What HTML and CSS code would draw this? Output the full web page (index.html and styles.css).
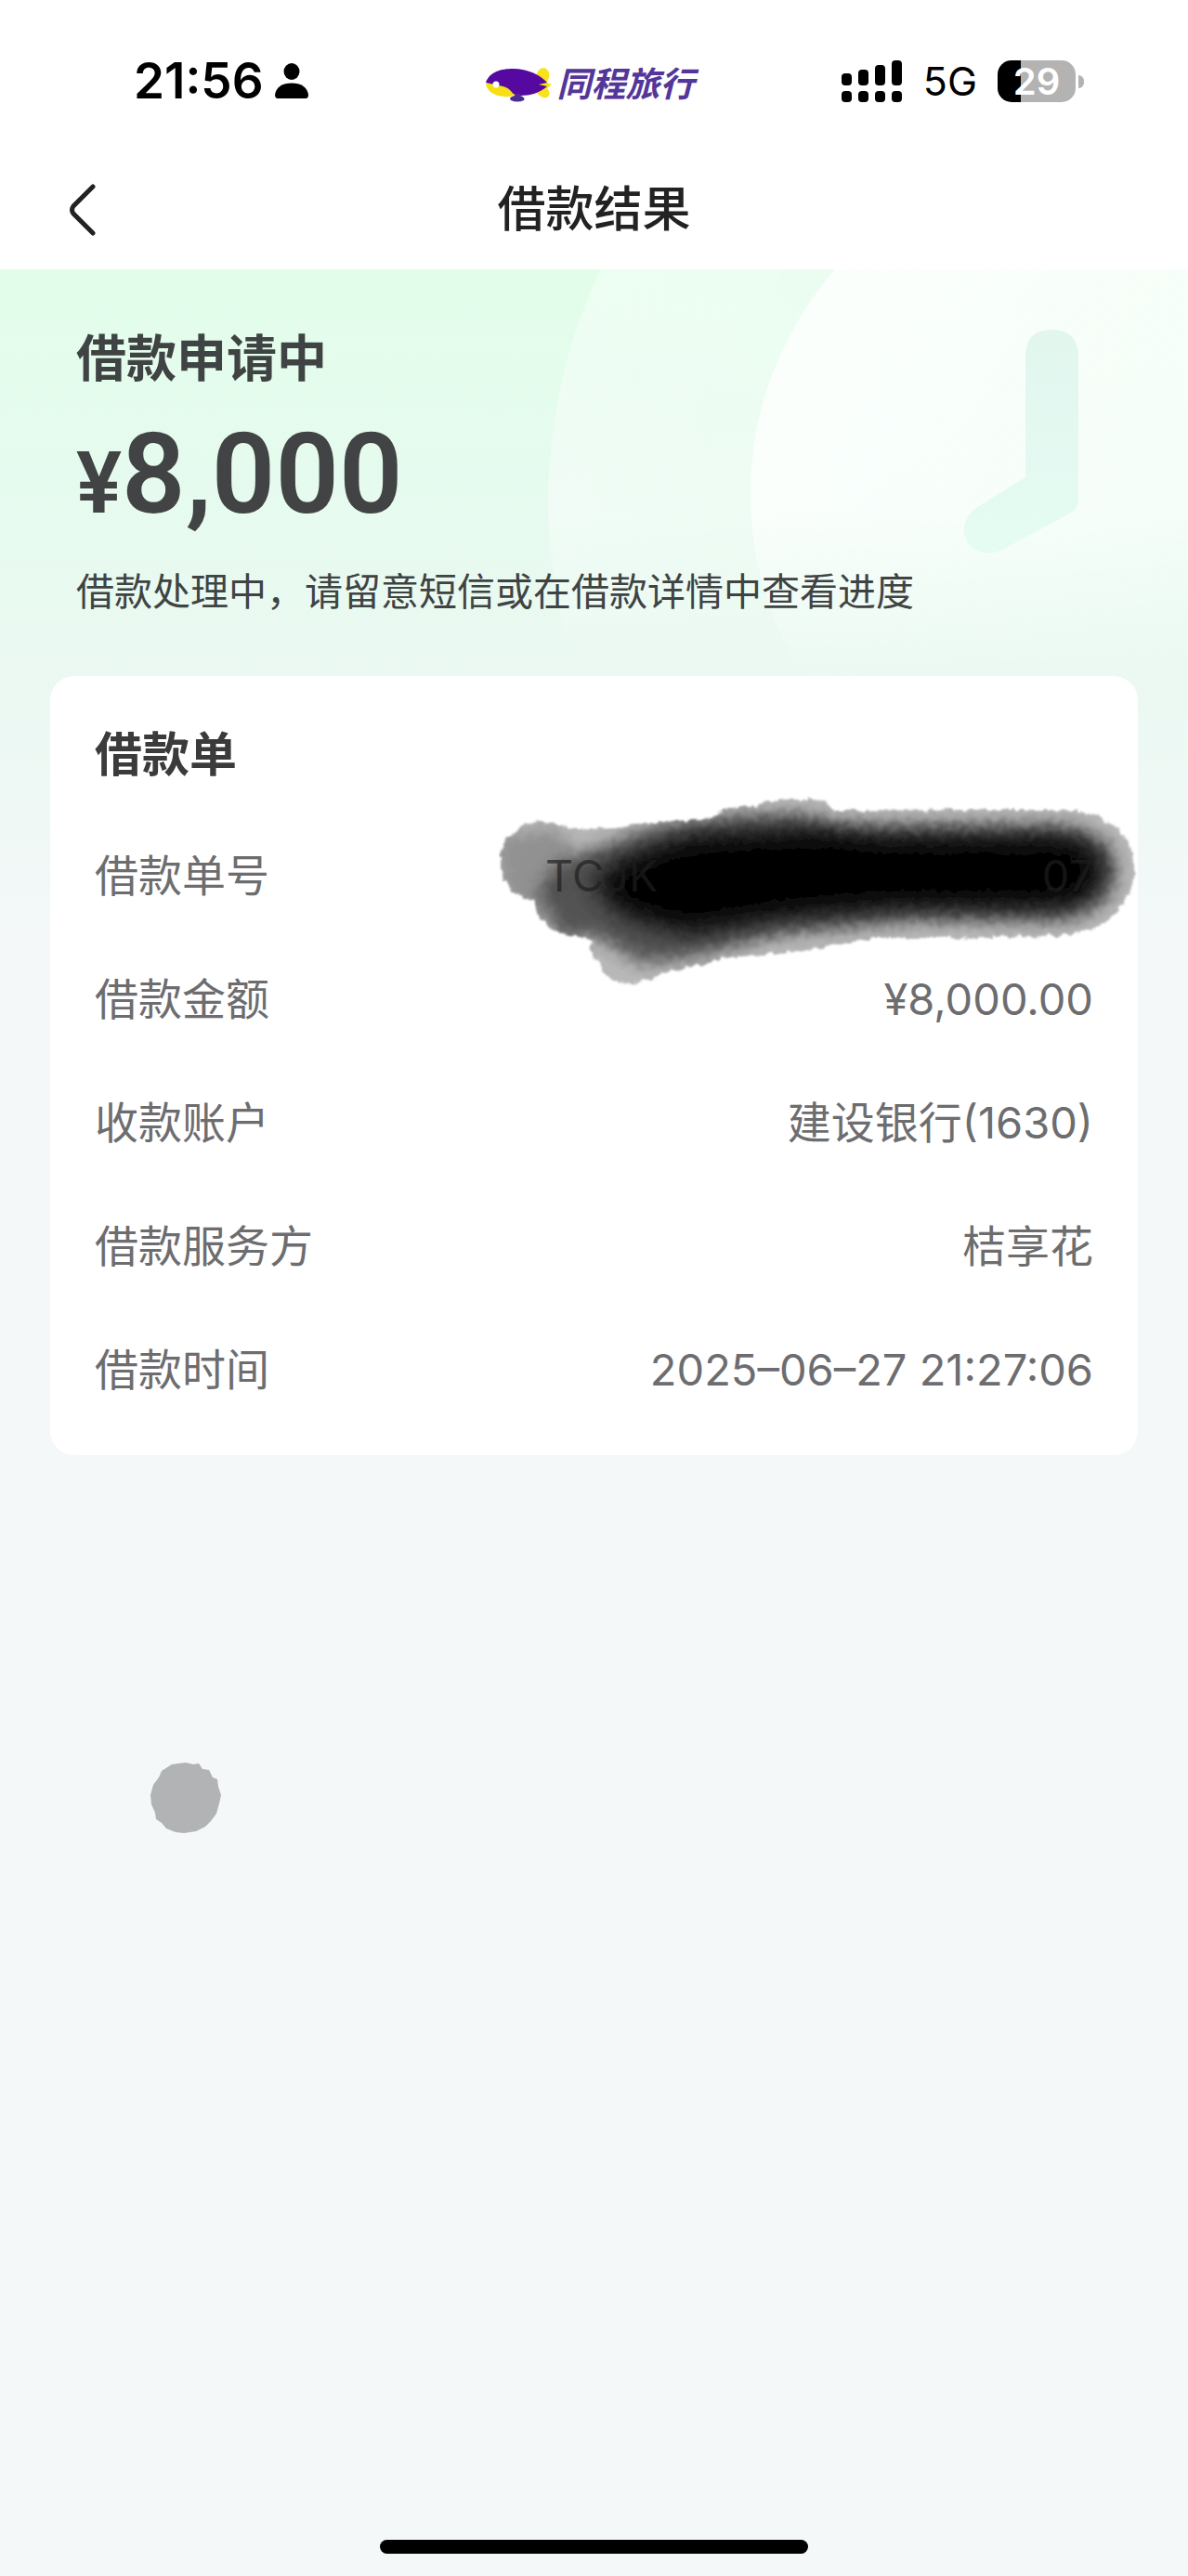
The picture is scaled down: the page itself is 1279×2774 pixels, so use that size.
FILE: index.html
```
<!DOCTYPE html>
<html lang="zh-CN">
<head>
    <meta charset="UTF-8">
    <meta name="viewport" content="width=device-width, initial-scale=1.0">
    <title>借款结果</title>
    <link rel="stylesheet" href="styles.css">
</head>
<body>
    <div class="status-bar">
        <div class="status-left">
            <span class="time">21:56</span>
            <svg class="person-icon" viewBox="0 0 36 38" aria-hidden="true">
                <ellipse cx="18" cy="9" rx="8.5" ry="9"/>
                <path d="M3 38Q0 38 0 34C1 26 8 21.500 18 21.500S35 26 36 34Q36 38 33 38Z"/>
            </svg>
        </div>
        <div class="brand">
            <svg class="brand-logo" viewBox="0 0 72 38" aria-hidden="true">
                <path d="M55 10Q57 1 64 1Q70 3 69 11L67 17L72 19L67 23Q72 29 67 33Q60 35 54 25Z" fill="#f8e21c"/>
                <path d="M1 18Q3 30 20 32Q30 33 35 28L14 15Z" fill="#f6df14"/>
                <path d="M1 17C5 5 18 2 30 2C47 2 60 9 67 17L58 19L67 21C59 28 49 31 38 31Q31 31 28 26Q24 21 14 20Q7 18 1 17Z" fill="#5609a0"/>
                <path d="M32 29H38V31Q44 33 42 36Q35 39 28 36Q25 33 32 31Z" fill="#4a2a93"/>
                <circle cx="12" cy="19" r="3.500" fill="#fff"/>
            </svg>
            <span class="brand-name">同程旅行</span>
        </div>
        <div class="status-right">
            <svg class="signal-icon" viewBox="0 0 66 45" aria-hidden="true">
                <rect x="0" y="14" width="11" height="13" rx="4"/>
                <rect x="18" y="10" width="11" height="17" rx="4"/>
                <rect x="36" y="5" width="11" height="22" rx="4"/>
                <rect x="54" y="0" width="11" height="27" rx="4"/>
                <rect x="0" y="33" width="11" height="12" rx="4"/>
                <rect x="18" y="33" width="11" height="12" rx="4"/>
                <rect x="36" y="33" width="11" height="12" rx="4"/>
                <rect x="54" y="33" width="11" height="12" rx="4"/>
            </svg>
            <span class="network">5G</span>
            <span class="battery">29</span>
        </div>
    </div>

    <header class="nav-bar">
        <button class="back-btn" type="button" aria-label="返回">
            <svg viewBox="0 0 30 56" aria-hidden="true">
                <path d="M26 3L5 24Q2 28 5 32L26 53"/>
            </svg>
        </button>
        <h1>借款结果</h1>
    </header>

    <main class="page">
        <!-- clock watermark -->
        <svg class="clock-bg" viewBox="0 0 700 438" aria-hidden="true">
            <defs>
                <linearGradient id="ringFill" x1="0" y1="0" x2="1" y2="0">
                    <stop offset="0" stop-color="#fff" stop-opacity="0.4"/>
                    <stop offset="1" stop-color="#fff" stop-opacity="0.1"/>
                </linearGradient>
                <linearGradient id="faceFill" x1="0" y1="0" x2="1" y2="1">
                    <stop offset="0" stop-color="#fff" stop-opacity="0.9"/>
                    <stop offset="0.500" stop-color="#fbfffc" stop-opacity="0.7"/>
                    <stop offset="1" stop-color="#f4f9f8" stop-opacity="0.3"/>
                </linearGradient>
                <linearGradient id="handFill" x1="0" y1="0" x2="0" y2="1">
                    <stop offset="0" stop-color="#e2f6ee"/>
                    <stop offset="1" stop-color="#e4fcf3"/>
                </linearGradient>
            </defs>
            <circle cx="591" cy="250" r="580" fill="url(#ringFill)"/>
            <circle cx="595" cy="242" r="366" fill="url(#faceFill)"/>
            <path d="M525 94Q525 65 553 65Q582 65 582 94V248Q582 258 573 263L498 303Q476 311 463 295Q452 274 470 258L525 224Z" fill="url(#handFill)"/>
        </svg>

        <section class="summary">
            <h2>借款申请中</h2>
            <p class="amount"><span class="currency">¥</span><span>8,000</span></p>
            <p class="hint">借款处理中，请留意短信或在借款详情中查看进度</p>
        </section>

        <section class="card">
            <h3>借款单</h3>
            <dl>
                <div class="row">
                    <dt>借款单号</dt>
                    <dd class="order-no"><span>TCJK</span><span>07</span></dd>
                </div>
                <div class="row">
                    <dt>借款金额</dt>
                    <dd>¥8,000.00</dd>
                </div>
                <div class="row">
                    <dt>收款账户</dt>
                    <dd>建设银行(1630)</dd>
                </div>
                <div class="row">
                    <dt>借款服务方</dt>
                    <dd>桔享花</dd>
                </div>
                <div class="row">
                    <dt>借款时间</dt>
                    <dd>2025–06–27 21:27:06</dd>
                </div>
            </dl>
            <!-- brush over the order number -->
            <svg class="brush" viewBox="536 855 688 210" aria-hidden="true">
                <defs>
                    <filter id="rough" x="-5%" y="-5%" width="110%" height="110%">
                        <feTurbulence type="fractalNoise" baseFrequency="0.12" numOctaves="3" seed="4" result="noise"/>
                        <feDisplacementMap in="SourceGraphic" in2="noise" scale="9" xChannelSelector="R" yChannelSelector="G"/>
                        <feGaussianBlur stdDeviation="0.800"/>
                    </filter>
                    <filter id="soft" x="-20%" y="-50%" width="140%" height="200%">
                        <feGaussianBlur stdDeviation="9"/>
                    </filter>
                    <filter id="softer" x="-20%" y="-50%" width="140%" height="200%">
                        <feGaussianBlur stdDeviation="14"/>
                    </filter>
                    <clipPath id="brushShape">
                        <path d="M538 927Q538 906 550 900Q562 885 582 885Q598 888 619 893L664 892Q680 886 699 886L758 882L778 873L828 864Q860 859 878 862Q893 866 897 873L1046 872L1121 872Q1160 871 1181 879Q1203 889 1210 903Q1221 918 1220 935Q1219 960 1210 970Q1201 989 1181 997Q1164 1007 1136 1008L997 1010H942L868 1023L773 1033L719 1047Q690 1059 671 1060Q658 1056 649 1047Q637 1032 635 1013L619 1008Q594 1006 584 993Q574 982 575 970Q545 964 540 943Z"/>
                    </clipPath>
                </defs>
                <g filter="url(#rough)">
                    <g clip-path="url(#brushShape)">
                        <rect x="530" y="850" width="700" height="220" fill="#b8b8b8"/>
                        <g filter="url(#soft)">
                            <path d="M530 900L600 890L620 920L580 1000L540 960Z" fill="#777" fill-opacity="0.6"/>
                            <path d="M578 958L605 925L665 905L700 892L790 878L860 876L905 890H1140Q1200 898 1200 937Q1200 980 1140 990H980L840 1006L740 1032L690 1038L640 1008L600 1010Z" fill="#333" fill-opacity="0.75"/>
                        </g>
                        <g filter="url(#softer)">
                            <path d="M635 950L670 925L740 900L880 893L950 900H1140Q1186 906 1186 937Q1184 970 1140 978H960L840 988L740 1005L670 985Z" fill="#000"/>
                        </g>
                    </g>
                </g>
            </svg>
        </section>

        <svg class="touch-dot" viewBox="0 0 78 78" aria-hidden="true">
            <path d="M24 3L39 1L47 3L53 2L57 8L64 9L68 17L73 19L74 27L77 36L75 45L72 56L66 64L60 70L50 75L37 77L28 76L18 72L13 66L7 62L6 55L2 46L1 36L4 25L10 17L13 10Z" fill="#b1b3b4"/>
        </svg>
    </main>

    <div class="home-indicator"></div>
</body>
</html>
```

FILE: styles.css
```
* {
    box-sizing: border-box;
}

body {
    display: flex;
    flex-direction: column;
    min-height: 100vh;
    margin: 0;
    background-color: #f4f8f9;
    color: #3f4343;
    font-family: Inter, "Noto Sans CJK SC", sans-serif;
}

h1, h2, h3, p, dl, dd {
    margin: 0;
}

/* status bar */
.status-bar {
    display: grid;
    grid-template-columns: 1fr auto 1fr;
    align-items: center;
    height: 174px;
    padding: 0 112px;
    background-color: #fff;
    color: #000;
}

.status-left,
.brand,
.status-right {
    display: flex;
    align-items: center;
}

.status-left {
    gap: 12px;
    padding-left: 32px;
}

.time {
    font-size: 53px;
    font-weight: 600;
}

.person-icon {
    width: 36px;
    height: 38px;
}

.brand {
    gap: 6px;
    padding: 8px 10px 0 0;
}

.brand-logo {
    width: 72px;
    height: 38px;
}

.brand-name {
    color: #54369a;
    font-size: 37px;
    font-style: italic;
    font-weight: 700;
    line-height: 40px;
}

.status-right {
    justify-content: flex-end;
    gap: 22px;
}

.signal-icon {
    width: 66px;
    height: 45px;
}

.network {
    font-size: 43px;
}

.battery {
    position: relative;
    width: 84px;
    height: 45px;
    margin-right: 9px;
    border-radius: 15px;
    background: linear-gradient(to right, #000 30%, #b3b3b3 30%);
    color: #fff;
    font-size: 40px;
    font-weight: 600;
    line-height: 45px;
    text-align: center;
}

.battery::after {
    content: "";
    position: absolute;
    top: 16px;
    right: -9px;
    width: 6px;
    height: 14px;
    border-radius: 0 6px 6px 0;
    background-color: #b3b3b3;
}

/* nav bar */
.nav-bar {
    display: grid;
    grid-template-columns: 1fr auto 1fr;
    align-items: center;
    height: 116px;
    padding: 0 74px 12px;
    background-color: #fff;
}

.back-btn {
    width: 30px;
    height: 56px;
    padding: 0;
    border: none;
    background: none;
    cursor: pointer;
}

.back-btn svg {
    display: block;
    width: 30px;
    height: 56px;
    fill: none;
    stroke: #222;
    stroke-width: 5;
    stroke-linecap: round;
}

.nav-bar h1 {
    color: #222;
    font-size: 52px;
    font-weight: 500;
    line-height: 76px;
}

/* content */
.page {
    position: relative;
    padding: 0 54px;
    background: linear-gradient(to bottom, #e2fdea 0, #e5fbee 200px, #ebf9f2 440px, #f4f8f9 720px);
}

.clock-bg {
    position: absolute;
    top: 0;
    right: 0;
    width: 700px;
    height: 438px;
    -webkit-mask-image: linear-gradient(to bottom, #000 60%, rgba(0, 0, 0, 0.1));
    mask-image: linear-gradient(to bottom, #000 60%, rgba(0, 0, 0, 0.1));
}

.summary {
    position: relative;
    padding: 62px 28px 61px;
}

.summary h2 {
    font-size: 54px;
    font-weight: 700;
    line-height: 70px;
}

.amount {
    display: flex;
    align-items: baseline;
    height: 110px;
    margin-top: 34px;
    color: #414345;
    font-family: Roboto, sans-serif;
    font-size: 120px;
    font-weight: 600;
    line-height: 110px;
}

.currency {
    font-size: 92px;
}

.hint {
    margin-top: 41px;
    font-size: 41px;
    line-height: 60px;
}

/* loan card */
.card {
    position: relative;
    padding: 50px 48px 26px;
    border-radius: 26px;
    background-color: #fff;
}

.card h3 {
    margin-bottom: 28px;
    color: #3b3b3b;
    font-size: 51px;
    font-weight: 700;
    line-height: 70px;
}

.row {
    display: flex;
    align-items: center;
    justify-content: space-between;
    height: 133px;
    color: #6d6d70;
    font-size: 47px;
    line-height: 60px;
}

.order-no {
    display: flex;
    justify-content: space-between;
    position: relative;
    z-index: 1;
    width: 590px;
    color: rgba(30, 30, 30, 0.7);
}

.brush {
    position: absolute;
    top: 127px;
    right: 0;
    width: 688px;
    height: 210px;
}

.touch-dot {
    display: block;
    width: 78px;
    height: 78px;
    margin: 330px 0 0 107px;
}

.home-indicator {
    width: 36%;
    height: 15px;
    margin: auto auto 24px;
    border-radius: 8px;
    background-color: #000;
}
```
